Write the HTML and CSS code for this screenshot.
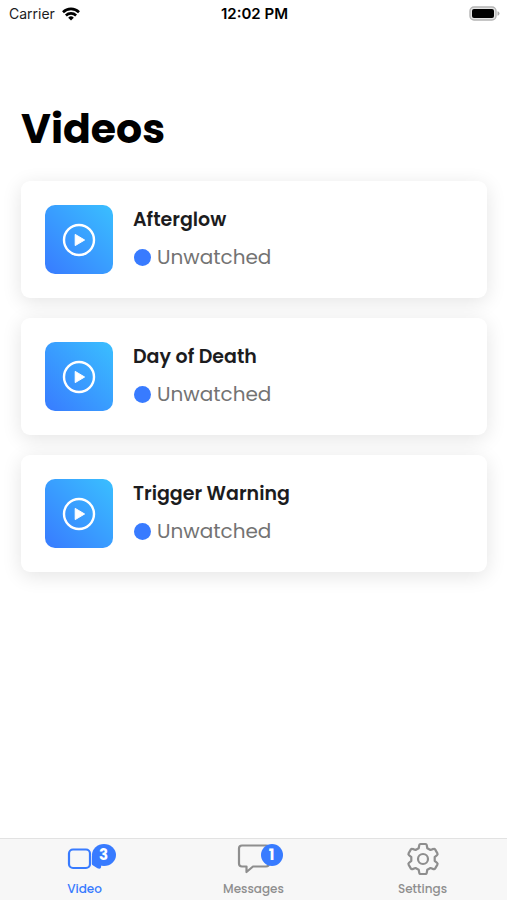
FILE: index.html

```html
<!DOCTYPE html>
<html lang="en">
<head>
<meta charset="utf-8">
<meta name="viewport" content="width=device-width, initial-scale=1">
<title>Videos</title>
<link rel="stylesheet" href="styles.css">
</head>
<body>
<header class="status">
  <div class="carrier">
    <span>Carrier</span>
    <svg width="18" height="14" viewBox="0 0 18 14" aria-hidden="true">
      <g fill="none" stroke="#000" stroke-width="2.6">
        <path d="M1 5.2a11.4 11.4 0 0 1 16 0"/>
        <path d="M3.9 8.5a7.3 7.3 0 0 1 10.2 0"/>
      </g>
      <path d="M9 13.6l-2.8-2.9a4 4 0 0 1 5.6 0z"/>
    </svg>
  </div>
  <time class="clock">12:02 PM</time>
  <svg class="battery" width="31" height="16" viewBox="0 0 31 16" aria-hidden="true">
    <rect x="1" y="1" width="26" height="13" rx="4" fill="#e4e4e4" stroke="#b4b4b4" stroke-width="1.4"/>
    <rect x="3" y="3" width="22" height="9" rx="2"/>
    <path d="M28.5 5.3q2 .5 2 2.2t-2 2.2z" fill="#aaa"/>
  </svg>
</header>

<main class="content">
  <h1 class="title">Videos</h1>
  <ul class="videos">
    <li><a class="card" href="#afterglow">
      <span class="thumb"><svg width="34" height="34" viewBox="0 0 34 34" aria-hidden="true"><circle cx="17" cy="17" r="15" fill="none" stroke="#fff" stroke-width="2.4"/><path d="M13.2 11.4v11.2l9.4-5.6z" fill="#fff" stroke="#fff" stroke-linejoin="round"/></svg></span>
      <span class="info"><strong class="name">Afterglow</strong><span class="state"><i class="dot"></i>Unwatched</span></span>
    </a></li>
    <li><a class="card" href="#day-of-death">
      <span class="thumb"><svg width="34" height="34" viewBox="0 0 34 34" aria-hidden="true"><circle cx="17" cy="17" r="15" fill="none" stroke="#fff" stroke-width="2.4"/><path d="M13.2 11.4v11.2l9.4-5.6z" fill="#fff" stroke="#fff" stroke-linejoin="round"/></svg></span>
      <span class="info"><strong class="name">Day of Death</strong><span class="state"><i class="dot"></i>Unwatched</span></span>
    </a></li>
    <li><a class="card" href="#trigger-warning">
      <span class="thumb"><svg width="34" height="34" viewBox="0 0 34 34" aria-hidden="true"><circle cx="17" cy="17" r="15" fill="none" stroke="#fff" stroke-width="2.4"/><path d="M13.2 11.4v11.2l9.4-5.6z" fill="#fff" stroke="#fff" stroke-linejoin="round"/></svg></span>
      <span class="info"><strong class="name">Trigger Warning</strong><span class="state"><i class="dot"></i>Unwatched</span></span>
    </a></li>
  </ul>
</main>

<nav class="tabs">
  <a class="tab active" href="#video">
    <span class="icon">
      <svg width="36" height="36" viewBox="0 0 36 36" fill="none" stroke="currentColor" stroke-width="2.2" stroke-linejoin="round" aria-hidden="true"><rect x="2" y="8.5" width="21" height="18.5" rx="4"/><path d="M26 15.5l7-4.5v15q-.5 1-2 .3l-5-3.3z" fill="currentColor"/></svg>
      <b class="badge">3</b>
    </span>
    <span>Video</span>
  </a>
  <a class="tab" href="#messages">
    <span class="icon">
      <svg width="36" height="36" viewBox="0 0 36 36" fill="none" stroke="currentColor" stroke-width="2.2" stroke-linejoin="round" aria-hidden="true"><path d="M6 4.5h24q3 0 3 3v15q0 3-3 3H17l-6.5 5.5v-5.5H6q-3 0-3-3v-15q0-3 3-3z"/></svg>
      <b class="badge">1</b>
    </span>
    <span>Messages</span>
  </a>
  <a class="tab" href="#settings">
    <span class="icon">
      <svg width="36" height="36" viewBox="0 0 36 36" fill="none" stroke="currentColor" stroke-width="2.2" stroke-linejoin="round" aria-hidden="true"><circle cx="18" cy="18" r="5"/><path d="M15.5 3h5q1 0 1.2 1l.6 3.2 3.2 1.8 3-1.1q1-.4 1.600.5l2.300 4q.5 1-.2 1.600l-2.500 2.200v3.600l2.500 2.200q.7.6.2 1.600l-2.300 4q-.6.9-1.600.5l-3-1.100-3.200 1.800-.6 3.200q-.2 1-1.200 1h-5q-1 0-1.200-1l-.6-3.200-3.200-1.800-3 1.100q-1 .4-1.600-.5l-2.300-4q-.5-1 .2-1.600l2.500-2.200v-3.600l-2.500-2.200q-.7-.6-.2-1.600l2.300-4q.6-.9 1.600-.5l3 1.100 3.200-1.800.6-3.200q.2-1 1.200-1z"/></svg>
    </span>
    <span>Settings</span>
  </a>
</nav>
</body>
</html>
```

FILE: styles.css

```css
* {
  box-sizing: border-box;
}

body {
  margin: 0;
  min-height: 100vh;
  display: flex;
  flex-direction: column;
  background: #fff;
  color: #1c1c1e;
  font-family: Poppins, Inter, "Liberation Sans", sans-serif;
}

a {
  color: inherit;
  text-decoration: none;
}

svg {
  display: block;
}

.status {
  display: grid;
  grid-template-columns: 1fr auto 1fr;
  align-items: center;
  height: 27px;
  padding: 0 7px 0 9px;
  font-family: Inter, sans-serif;
  font-size: 14px;
}

.carrier {
  display: flex;
  align-items: center;
  gap: 7px;
}

.clock {
  font-size: 15px;
  font-weight: 600;
  color: #000;
}

.battery {
  justify-self: end;
}

.content {
  flex: 1;
  padding: 72px 20px 20px 21px;
}

.title {
  margin: 0 0 22px;
  font-size: 41px;
  line-height: 60px;
  font-weight: 700;
  color: #000;
}

.videos {
  display: grid;
  gap: 20px;
  margin: 0;
  padding: 0;
  list-style: none;
}

.card {
  display: flex;
  align-items: flex-start;
  gap: 20px;
  padding: 24px;
  border-radius: 9px;
  background: #fff;
  box-shadow: 0 4px 20px rgba(0, 0, 0, 0.11);
}

.thumb {
  flex: none;
  display: grid;
  place-items: center;
  width: 68px;
  height: 69px;
  border-radius: 10px;
  background: linear-gradient(to top right, #387bff, #3abfff);
}

.info {
  display: grid;
  gap: 9px;
  padding-top: 1px;
}

.name {
  font-size: 19px;
  line-height: 28px;
  font-weight: 600;
}

.state {
  display: flex;
  align-items: center;
  gap: 6px;
  padding-left: 1px;
  font-size: 20px;
  line-height: 28px;
  color: #737373;
}

.dot {
  width: 17px;
  height: 17px;
  border-radius: 50%;
  background: #387bff;
}

.tabs {
  position: sticky;
  bottom: 0;
  display: grid;
  grid-template-columns: repeat(3, 1fr);
  border-top: 1px solid #e2e2e2;
  background: #f7f7f7;
}

.tab {
  display: flex;
  flex-direction: column;
  align-items: center;
  gap: 2px;
  padding: 2px 0 1px;
  color: #8e8e8e;
  font-size: 12px;
  line-height: 20px;
  font-weight: 500;
}

.active {
  color: #387bff;
}

.icon {
  position: relative;
}

.badge {
  position: absolute;
  top: 3px;
  left: 25px;
  width: 22px;
  height: 22px;
  border-radius: 50%;
  background: #387bff;
  color: #fff;
  font-size: 15px;
  line-height: 22px;
  text-align: center;
}

.active .badge {
  width: 24px;
}
```
